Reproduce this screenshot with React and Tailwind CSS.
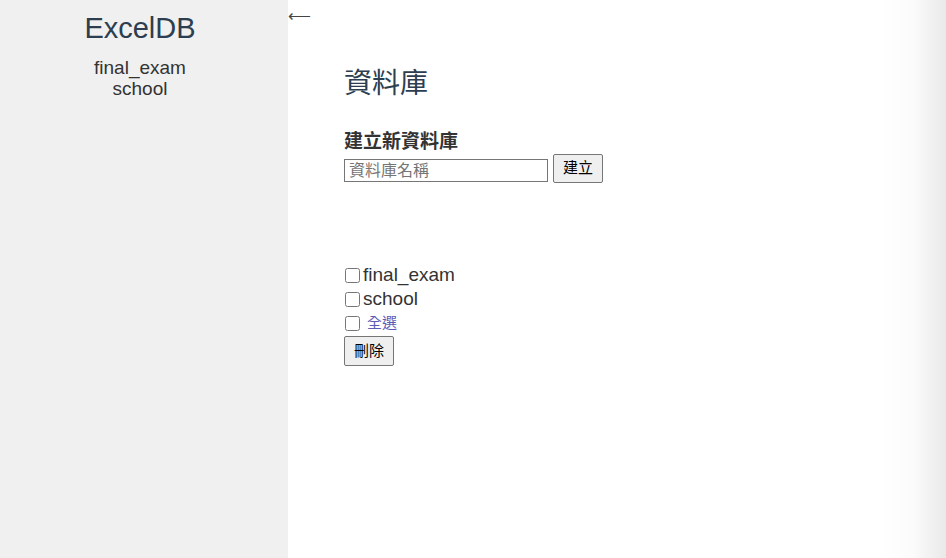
import React from "react";

export default function App() {
  const dbs = ["final_exam", "school"];
  return (
    <div className="flex h-[558px] w-[946px] overflow-hidden bg-white text-[#2c3e50]" style={{ fontFamily: '"Liberation Sans", Arial, "Noto Sans CJK TC", sans-serif' }}>
      <aside className="flex w-[288px] shrink-0 flex-col items-center bg-[#f0f0f0] pr-[8px] pt-[11px]">
        <h1 className="text-[29px] leading-[35px] text-[#2c3e50]">ExcelDB</h1>
        <div className="mt-[11px] flex flex-col items-center text-[19px] leading-[21px] text-[#333]">
          {dbs.map((d) => (
            <span key={d}>{d}</span>
          ))}
        </div>
      </aside>
      <div className="relative flex-1">
        <span className="absolute left-0 top-[6px] text-[16px] leading-[20px] text-[#444]">⟵</span>
        <main className="pl-[56px] pt-[67px]">
          <h2 className="text-[28px] leading-[34px] text-[#2c3e50]">資料庫</h2>
          <h3 className="mt-[30px] text-[19px] font-bold leading-[22px] text-[#333]">建立新資料庫</h3>
          <div className="mt-[1px] flex items-start gap-[5px]">
            <input
              className="mt-[5px] h-[23px] w-[204px] border border-[#767676] px-[4px] text-[16px] text-[#333] placeholder:text-[#757575]"
              placeholder="資料庫名稱"
            />
            <button className="h-[29px] rounded-[2px] border border-[#767676] bg-[#efefef] px-[9px] text-[15px] text-black">建立</button>
          </div>
          <div className="mt-[80px] flex flex-col items-start text-[19px] leading-[24px] text-[#333]">
            {dbs.map((d) => (
              <label key={d} className="flex items-center">
                <input type="checkbox" className="m-0 mr-[3px] ml-[1px] h-[15px] w-[15px]" />
                <span>{d}</span>
              </label>
            ))}
            <label className="flex items-center text-[15px] leading-[24px]">
              <input type="checkbox" className="m-0 ml-[1px] mr-[7px] h-[15px] w-[15px]" />
              <span className="text-[#5b5bb5]">全選</span>
            </label>
            <button className="mt-[1px] h-[30px] rounded-[2px] border border-[#767676] bg-[#efefef] px-[9px] text-[15px] text-black">刪除</button>
          </div>
        </main>
      </div>
      <div className="w-[66px] shrink-0 bg-gradient-to-r from-white via-[#fbfbfb] to-[#e9e9e9]" />
    </div>
  );
}
